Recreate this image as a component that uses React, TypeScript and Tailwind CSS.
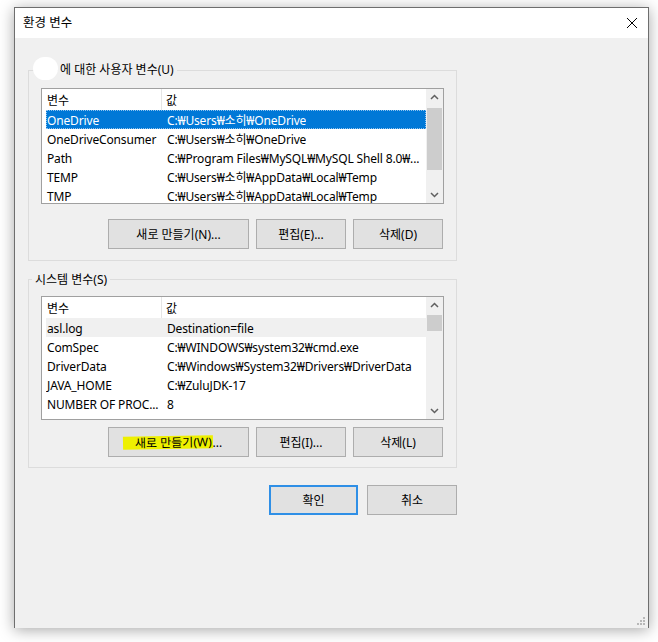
import React from "react";

const font = { fontFamily: '"Noto Sans", "Noto Sans CJK KR", sans-serif' };

function Chevron({ dir }: { dir: "up" | "down" }) {
  return (
    <svg width="17" height="17" viewBox="0 0 17 17">
      {dir === "up" ? (
        <path d="M5 10 L8.5 6.5 L12 10" fill="none" stroke="#606060" strokeWidth="1.5" />
      ) : (
        <path d="M5 7 L8.5 10.5 L12 7" fill="none" stroke="#606060" strokeWidth="1.5" />
      )}
    </svg>
  );
}

type Row = { name: string; value: string; selected?: boolean; soft?: boolean };

function ListBox({
  rows,
  height,
  thumbTop,
  thumbHeight,
}: {
  rows: Row[];
  height: number;
  thumbTop: number;
  thumbHeight: number;
}) {
  return (
    <div
      className="w-[403px] border border-[#a0a0a0] bg-white flex overflow-hidden"
      style={{ height }}
    >
      <div className="flex-1 flex flex-col overflow-hidden">
        <div className="h-[21px] flex shrink-0 items-center">
          <div className="w-[120px] h-full pl-[5px] pt-[2px] flex items-center border-r border-[#e5e5e5]">변수</div>
          <div className="pl-[4px] pt-[2px]">값</div>
        </div>
        {rows.map((r, i) => (
          <div
            key={i}
            className={
              "ml-[4px] h-[19px] shrink-0 flex items-center pt-[2px] whitespace-nowrap tracking-[-0.15px] " +
              (r.selected
                ? "bg-[#0078d7] text-white outline outline-1 outline-dotted outline-[#8fc3ef] -outline-offset-1"
                : r.soft
                ? "bg-[#f0f0f0]"
                : "")
            }
          >
            <div className="w-[116px] pl-[1px] overflow-hidden">{r.name}</div>
            <div className="pl-[5px] overflow-hidden">{r.value}</div>
          </div>
        ))}
      </div>
      <div className="w-[17px] bg-[#f0f0f0] relative flex flex-col justify-between">
        <Chevron dir="up" />
        <Chevron dir="down" />
        <div
          className="absolute left-[1px] right-[1px] bg-[#cdcdcd]"
          style={{ top: thumbTop, height: thumbHeight }}
        />
      </div>
    </div>
  );
}

function Btn({ w, children, def }: { w: number; children: React.ReactNode; def?: boolean }) {
  return (
    <div
      className={
        "h-[30px] flex items-center justify-center bg-[#e1e1e1] pt-[1px] " +
        (def ? "border-2 border-[#2f8fe6]" : "border border-[#adadad]")
      }
      style={{ width: w }}
    >
      {children}
    </div>
  );
}

export default function App() {
  const userRows: Row[] = [
    { name: "OneDrive", value: "C:₩Users₩소히₩OneDrive", selected: true },
    { name: "OneDriveConsumer", value: "C:₩Users₩소히₩OneDrive" },
    { name: "Path", value: "C:₩Program Files₩MySQL₩MySQL Shell 8.0₩..." },
    { name: "TEMP", value: "C:₩Users₩소히₩AppData₩Local₩Temp" },
    { name: "TMP", value: "C:₩Users₩소히₩AppData₩Local₩Temp" },
  ];
  const sysRows: Row[] = [
    { name: "asl.log", value: "Destination=file", soft: true },
    { name: "ComSpec", value: "C:₩WINDOWS₩system32₩cmd.exe" },
    { name: "DriverData", value: "C:₩Windows₩System32₩Drivers₩DriverData" },
    { name: "JAVA_HOME", value: "C:₩ZuluJDK-17" },
    { name: "NUMBER OF PROC...", value: "8" },
  ];

  return (
    <div className="w-[658px] h-[642px] bg-white overflow-hidden text-[12px] text-black" style={font}>
      <div className="ml-[14px] mt-[7px] w-[635px] h-[621px] border-l border-t border-r border-[#6e6e6e] shadow-[0_2px_14px_rgba(0,0,0,0.35)] flex flex-col relative">
        <div className="h-[30px] bg-white flex items-center justify-between pl-[8px] pr-[10px] shrink-0">
          <span className="text-[12.5px]">환경 변수</span>
          <svg width="12" height="12" viewBox="0 0 12 12">
            <path d="M1 1 L11 11 M11 1 L1 11" stroke="#000" strokeWidth="1" />
          </svg>
        </div>
        <div className="flex-1 bg-[#f0f0f0] pl-[13px] pt-[32px]">
          {/* User variables group */}
          <div className="w-[429px] border border-[#dcdcdc] relative pl-[12px] pt-[17px] pr-[12px] pb-[11px]">
            <div className="absolute -top-[14px] left-[4px] flex items-center">
              <div className="w-[25px] h-[23px] rounded-full bg-white" />
              <span className="bg-[#f0f0f0] pl-[2px] pr-[3px] leading-[14px] mt-[3px]">에 대한 사용자 변수(U)</span>
            </div>
            <ListBox rows={userRows} height={116} thumbTop={19} thumbHeight={62} />
            <div className="flex justify-end gap-[7px] mt-[15px] pr-[1px]">
              <Btn w={141}>새로 만들기(N)...</Btn>
              <Btn w={90}>편집(E)...</Btn>
              <Btn w={90}>삭제(D)</Btn>
            </div>
          </div>
          {/* System variables group */}
          <div className="w-[429px] mt-[18px] border border-[#dcdcdc] relative pl-[12px] pt-[16px] pr-[12px] pb-[10px]">
            <span className="absolute -top-[7px] left-[3px] bg-[#f0f0f0] px-[3px] leading-[14px]">시스템 변수(S)</span>
            <ListBox rows={sysRows} height={124} thumbTop={18} thumbHeight={16} />
            <div className="flex justify-end gap-[7px] mt-[7px] pr-[1px]">
              <Btn w={141}>
                <span className="bg-[#eef000] pl-[12px] -ml-[12px] pr-[1px] leading-[13px] -rotate-[1deg]">새로 만들기(W)</span>...
              </Btn>
              <Btn w={90}>편집(I)...</Btn>
              <Btn w={90}>삭제(L)</Btn>
            </div>
          </div>
          <div className="w-[429px] flex justify-end gap-[9px] mt-[17px]">
            <Btn w={89} def>확인</Btn>
            <Btn w={90}>취소</Btn>
          </div>
        </div>
        <svg className="absolute right-[2px] bottom-[2px]" width="10" height="10" viewBox="0 0 10 10">
          <rect x="7" y="1" width="2" height="2" fill="#b8b8b8" />
          <rect x="4" y="4" width="2" height="2" fill="#b8b8b8" />
          <rect x="7" y="4" width="2" height="2" fill="#b8b8b8" />
          <rect x="1" y="7" width="2" height="2" fill="#b8b8b8" />
          <rect x="4" y="7" width="2" height="2" fill="#b8b8b8" />
          <rect x="7" y="7" width="2" height="2" fill="#b8b8b8" />
        </svg>
      </div>
    </div>
  );
}
